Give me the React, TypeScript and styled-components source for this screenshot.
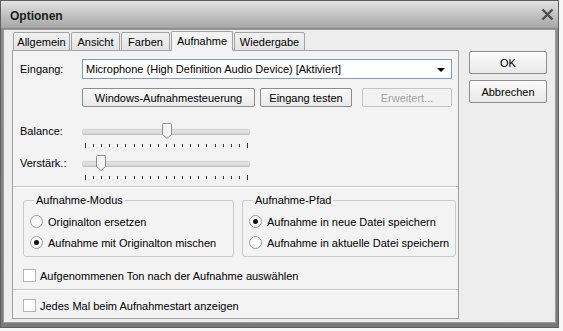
import React from "react";
import styled, { createGlobalStyle } from "styled-components";

const GlobalStyle = createGlobalStyle`
  html, body {
    margin: 0;
    padding: 0;
    background: #f7f7f7;
  }
  body {
    font-family: "Liberation Sans", Arial, sans-serif;
    font-size: 11px;
    color: #000;
  }
`;

const Window = styled.div`
  width: 559px;
  height: 328px;
  box-sizing: border-box;
  border: 1px solid #5e5e5e;
  background: linear-gradient(#8f8f8f, #7a7a7a);
  display: flex;
  flex-direction: column;
`;

const TitleBar = styled.div`
  height: 27px;
  flex: none;
  display: flex;
  align-items: center;
  justify-content: space-between;
  padding: 0 4px 0 9px;
  background: linear-gradient(#e2e2e2 0%, #c9c9c9 40%, #b2b2b2 80%, #a6a6a6 100%);
  border-bottom: 1px solid #8a8a8a;
`;

const Title = styled.span`
  font-weight: bold;
  font-size: 12px;
  color: #1b1b1b;
  padding-top: 2px;
`;

const CloseBox = styled.div`
  width: 14px;
  height: 14px;
  display: flex;
  align-items: center;
  justify-content: center;
`;

const Client = styled.div`
  flex: 1;
  margin: 0 2px 4px 2px;
  background: #ededed;
  border: 1px solid #9a9a9a;
  display: flex;
  gap: 10px;
  padding: 1px 8px 0 8px;
`;

const TabArea = styled.div`
  width: 448px;
  display: flex;
  flex-direction: column;
`;

const TabStrip = styled.div`
  display: flex;
  align-items: flex-end;
  height: 20px;
  padding-left: 1px;
  margin-bottom: -1px;
  position: relative;
  z-index: 1;
`;

const Tab = styled.div<{ $active?: boolean; $w: number }>`
  width: ${(p) => p.$w}px;
  box-sizing: border-box;
  height: ${(p) => (p.$active ? 20 : 19)}px;
  margin-right: 1px;
  display: flex;
  align-items: center;
  justify-content: center;
  padding-top: ${(p) => (p.$active ? 0 : 1)}px;
  border: 1px solid #a3a3a3;
  border-bottom: ${(p) => (p.$active ? "1px solid #f3f3f3" : "1px solid #a3a3a3")};
  border-radius: 2px 2px 0 0;
  background: ${(p) =>
    p.$active ? "#f3f3f3" : "linear-gradient(#f2f2f2, #e3e3e3)"};
`;

const Panel = styled.div`
  flex: 1;
  margin-bottom: 3px;
  border: 1px solid #a0a0a0;
  background: #f3f3f3;
  display: flex;
  flex-direction: column;
`;

const Row = styled.div<{ $top?: number; $left?: number }>`
  display: flex;
  align-items: center;
  margin-top: ${(p) => p.$top ?? 0}px;
  margin-left: ${(p) => p.$left ?? 0}px;
`;

const Label = styled.span`
  width: 62px;
  padding-left: 7px;
  flex: none;
`;

const Select = styled.div`
  width: 370px;
  height: 20px;
  box-sizing: border-box;
  border: 1px solid #7f9db9;
  background: #fff;
  display: flex;
  align-items: center;
  justify-content: space-between;
  padding: 0 6px 0 3px;
`;

const Arrow = styled.span`
  width: 0;
  height: 0;
  border-left: 4px solid transparent;
  border-right: 4px solid transparent;
  border-top: 4px solid #000;
  margin-top: 1px;
`;

const Button = styled.div<{ $w: number; $h?: number; $gap?: number; $disabled?: boolean }>`
  width: ${(p) => p.$w}px;
  height: ${(p) => p.$h ?? 19}px;
  margin-left: ${(p) => p.$gap ?? 0}px;
  box-sizing: border-box;
  border: 1px solid ${(p) => (p.$disabled ? "#c4c4c4" : "#8c8c8c")};
  border-radius: 2px;
  background: ${(p) =>
    p.$disabled ? "#f2f2f2" : "linear-gradient(#fafafa, #e9e9e9)"};
  color: ${(p) => (p.$disabled ? "#a3a3a3" : "#000")};
  display: flex;
  align-items: center;
  justify-content: center;
`;

const SliderRow = styled.div<{ $top: number }>`
  display: flex;
  align-items: flex-start;
  margin-top: ${(p) => p.$top}px;
`;

const SliderLabel = styled.span`
  width: 61px;
  padding-left: 7px;
  flex: none;
  padding-top: 2px;
`;

const Slider = styled.div`
  width: 170px;
  height: 23px;
  position: relative;
`;

const Track = styled.div`
  margin: 6px 1px 0 1px;
  height: 4px;
  border-radius: 2px;
  background: linear-gradient(#e4e4e4, #d6d6d6);
  border: 1px solid #d0d0d0;
  border-bottom-color: #bdbdbd;
`;

const Thumb = styled.svg<{ $left: number }>`
  position: absolute;
  left: ${(p) => p.$left}px;
  top: 0;
`;

const Ticks = styled.div`
  display: flex;
  justify-content: space-between;
  align-items: flex-start;
  margin: 8px 3px 0 4px;
`;

const Tick = styled.span<{ $end?: boolean }>`
  width: 1px;
  height: ${(p) => (p.$end ? 5 : 3)}px;
  margin-top: ${(p) => (p.$end ? 0 : 1)}px;
  background: #333;
`;

const Separator = styled.div<{ $top: number }>`
  margin-top: ${(p) => p.$top}px;
  height: 0;
  border-top: 1px solid #c6c6c6;
  border-bottom: 1px solid #fff;
`;

const Groups = styled.div`
  display: flex;
  gap: 8px;
  margin: 6px 0 0 10px;
`;

const Group = styled.fieldset<{ $w: number }>`
  width: ${(p) => p.$w}px;
  box-sizing: border-box;
  margin: 0;
  padding: 5px 6px 3px 6px;
  border: 1px solid #cacaca;
  border-radius: 3px;
  display: flex;
  flex-direction: column;
`;

const Legend = styled.legend`
  padding: 0 2px 0 2px;
  margin-left: 4px;
`;

const Option = styled.div`
  display: flex;
  align-items: center;
  gap: 5px;
  height: 21px;
  white-space: nowrap;
`;

const Radio = styled.span<{ $on?: boolean }>`
  width: 13px;
  height: 13px;
  flex: none;
  box-sizing: border-box;
  border-radius: 50%;
  border: 1px solid #9a9a9a;
  background: radial-gradient(circle at 50% 40%, #ffffff 50%, #ececec 100%);
  display: flex;
  align-items: center;
  justify-content: center;
  &::after {
    content: "";
    display: ${(p) => (p.$on ? "block" : "none")};
    width: 5px;
    height: 5px;
    border-radius: 50%;
    background: #111;
  }
`;

const Check = styled.span`
  width: 13px;
  height: 13px;
  flex: none;
  box-sizing: border-box;
  border: 1px solid #b4b4b4;
  background: #fff;
`;

const CheckRow = styled.div<{ $top: number }>`
  display: flex;
  align-items: center;
  gap: 4px;
  height: 15px;
  margin: ${(p) => p.$top}px 0 0 10px;
`;

const SideButtons = styled.div`
  display: flex;
  flex-direction: column;
  gap: 6px;
  padding-top: 20px;
`;

function CloseIcon() {
  return (
    <CloseBox>
      <svg width="13" height="13" viewBox="0 0 13 13">
        <path d="M1.5 1.5 L11.5 11.5 M11.5 1.5 L1.5 11.5" stroke="#4e4e4e" strokeWidth="2.4" />
      </svg>
    </CloseBox>
  );
}

function TrackBar({ thumb }: { thumb: number }) {
  const ticks = Array.from({ length: 21 }, (_, i) => i);
  return (
    <Slider>
      <Track />
      <Thumb $left={thumb} width="10" height="16" viewBox="0 0 10 16">
        <path
          d="M0.5 1.5 Q0.5 0.5 1.5 0.5 L8.5 0.5 Q9.5 0.5 9.5 1.5 L9.5 11.5 L5 15.5 L0.5 11.5 Z"
          fill="#f4f4f4"
          stroke="#8d8d8d"
        />
        <path d="M1.5 1.5 L8.5 1.5" stroke="#fff" />
      </Thumb>
      <Ticks>
        {ticks.map((i) => (
          <Tick key={i} $end={i === 0 || i === 20} />
        ))}
      </Ticks>
    </Slider>
  );
}

export default function App() {
  return (
    <>
      <GlobalStyle />
      <Window>
        <TitleBar>
          <Title>Optionen</Title>
          <CloseIcon />
        </TitleBar>
        <Client>
          <TabArea>
            <TabStrip>
              <Tab $w={57}>Allgemein</Tab>
              <Tab $w={49}>Ansicht</Tab>
              <Tab $w={49}>Farben</Tab>
              <Tab $w={62} $active>
                Aufnahme
              </Tab>
              <Tab $w={71}>Wiedergabe</Tab>
            </TabStrip>
            <Panel>
              <Row $top={8}>
                <Label>Eingang:</Label>
                <Select>
                  <span>Microphone (High Definition Audio Device) [Aktiviert]</span>
                  <Arrow />
                </Select>
              </Row>
              <Row $top={9} $left={69}>
                <Button $w={173}>Windows-Aufnahmesteuerung</Button>
                <Button $w={92} $gap={5}>
                  Eingang testen
                </Button>
                <Button $w={90} $gap={10} $disabled>
                  Erweitert...
                </Button>
              </Row>
              <SliderRow $top={16}>
                <SliderLabel>Balance:</SliderLabel>
                <TrackBar thumb={81} />
              </SliderRow>
              <SliderRow $top={9}>
                <SliderLabel>Verstärk.:</SliderLabel>
                <TrackBar thumb={15} />
              </SliderRow>
              <Separator $top={8} />
              <Groups>
                <Group $w={211}>
                  <Legend>Aufnahme-Modus</Legend>
                  <Option>
                    <Radio />
                    Originalton ersetzen
                  </Option>
                  <Option>
                    <Radio $on />
                    Aufnahme mit Originalton mischen
                  </Option>
                </Group>
                <Group $w={211}>
                  <Legend>Aufnahme-Pfad</Legend>
                  <Option>
                    <Radio $on />
                    Aufnahme in neue Datei speichern
                  </Option>
                  <Option>
                    <Radio />
                    Aufnahme in aktuelle Datei speichern
                  </Option>
                </Group>
              </Groups>
              <CheckRow $top={11}>
                <Check />
                Aufgenommenen Ton nach der Aufnahme auswählen
              </CheckRow>
              <Separator $top={6} />
              <CheckRow $top={7}>
                <Check />
                Jedes Mal beim Aufnahmestart anzeigen
              </CheckRow>
            </Panel>
          </TabArea>
          <SideButtons>
            <Button $w={78} $h={23}>
              OK
            </Button>
            <Button $w={78} $h={23}>
              Abbrechen
            </Button>
          </SideButtons>
        </Client>
      </Window>
    </>
  );
}
